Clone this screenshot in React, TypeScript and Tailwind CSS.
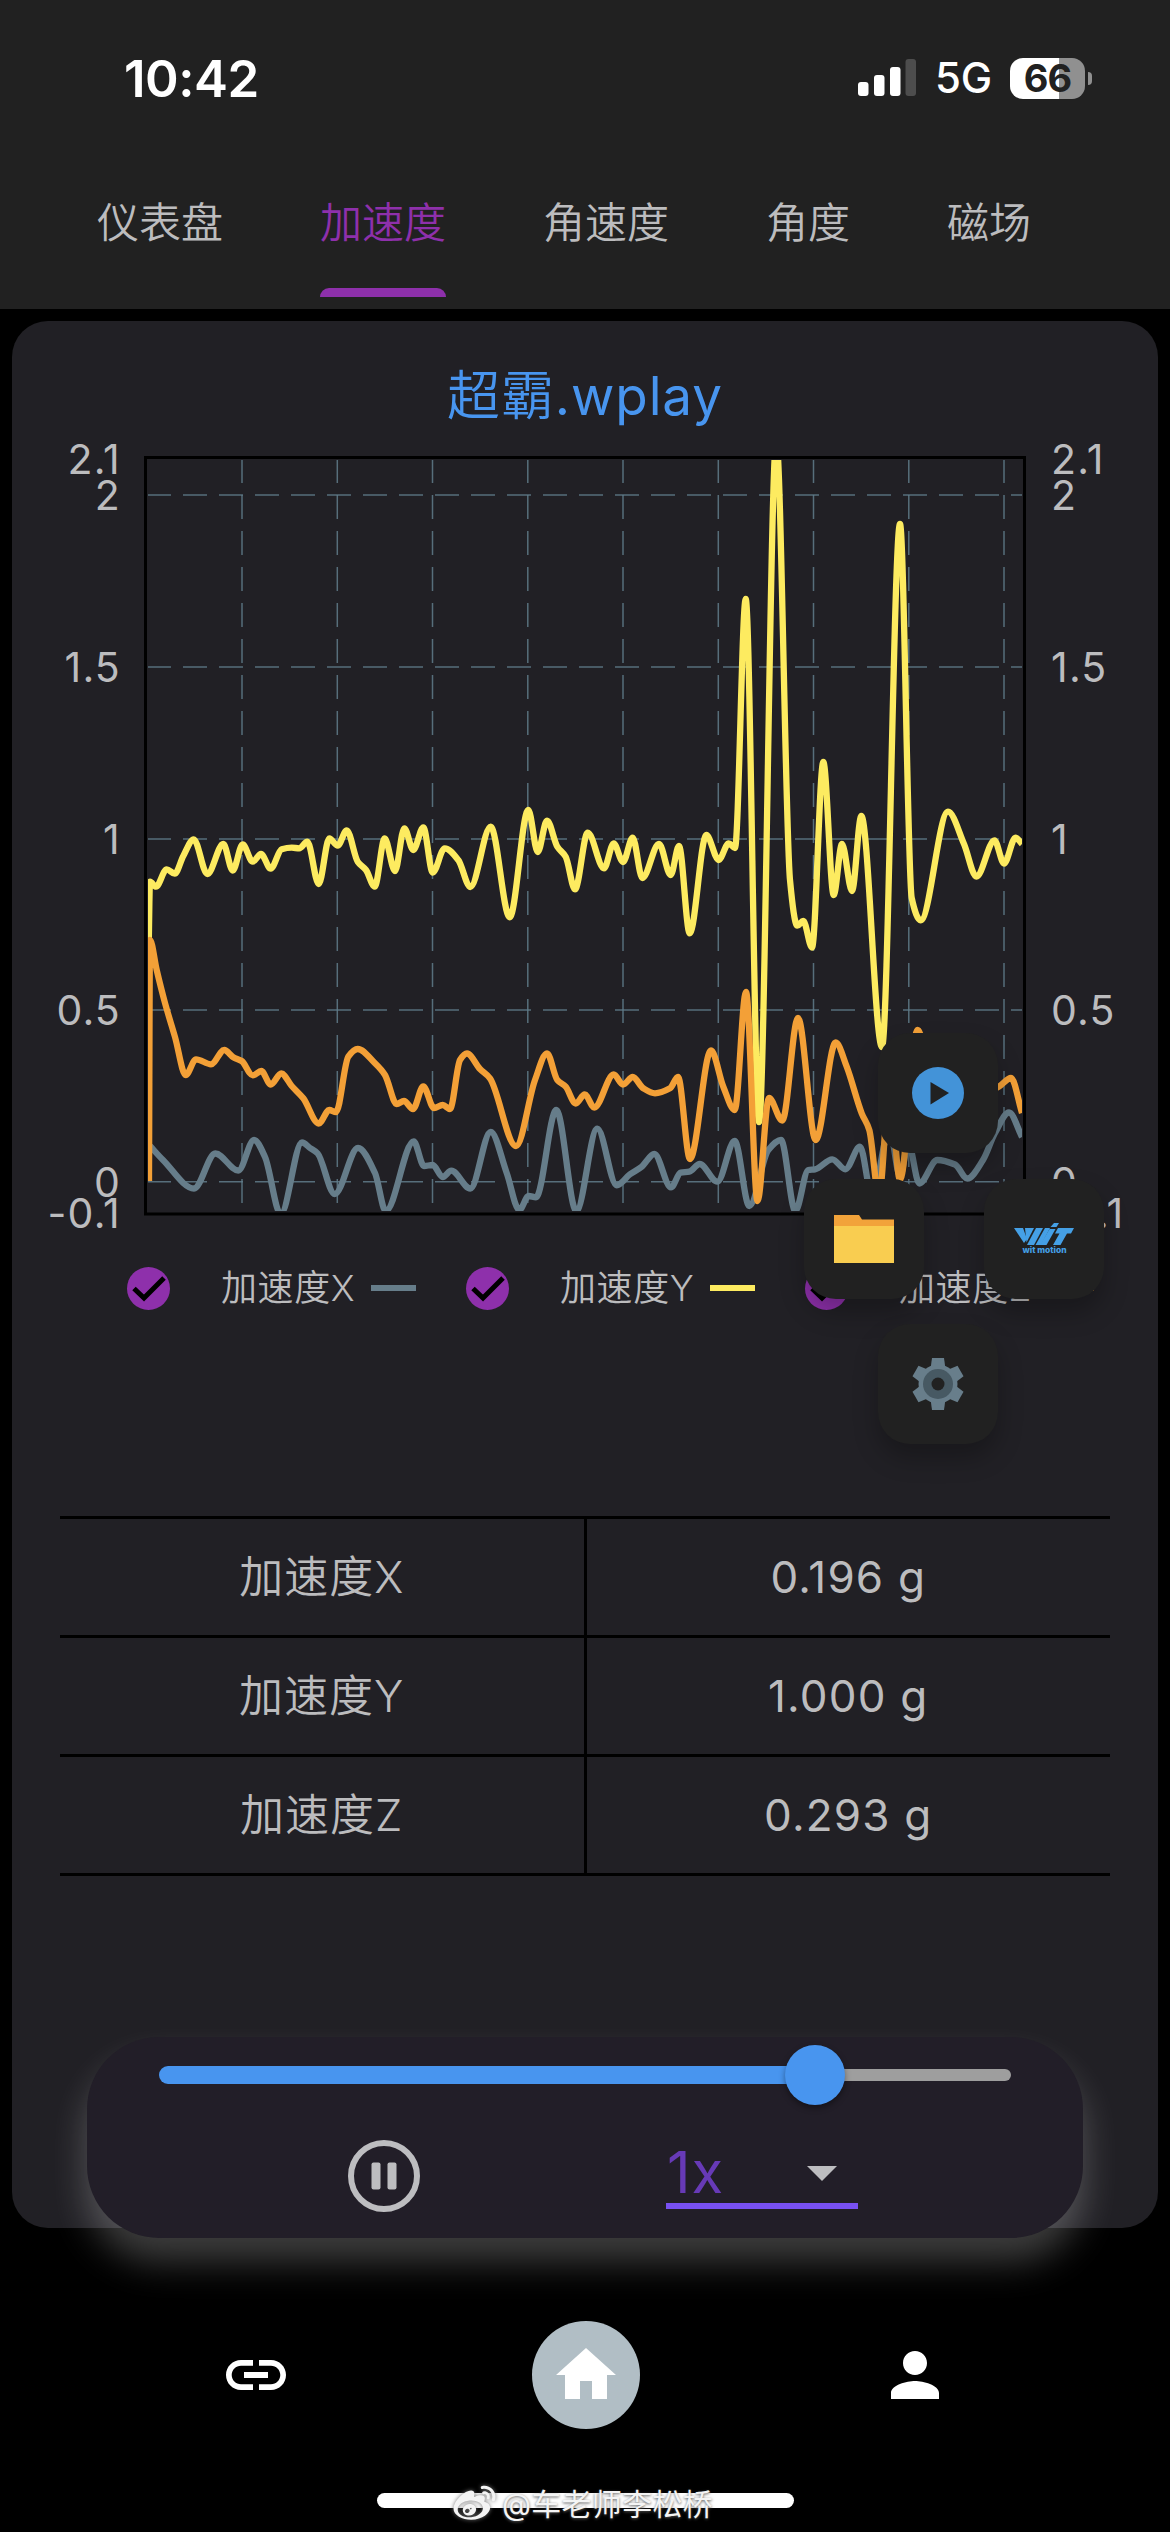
import type { ReactNode } from "react";
import { MdArrowDropDown, MdHome, MdLink, MdPerson } from "react-icons/md";
import { FaWeibo } from "react-icons/fa";

type Point = [number, number];

const tabs = ["仪表盘", "加速度", "角速度", "角度", "磁场"];

const rows = [
  { label: "加速度X", value: "0.196 g" },
  { label: "加速度Y", value: "1.000 g" },
  { label: "加速度Z", value: "0.293 g" },
];

const gridX = [242, 337.3, 432.5, 527.8, 623, 718.3, 813.5, 908.8, 1004];
const gridY = [495, 667, 839, 1010, 1181.7];

const yLabels = [
  { text: "2.1", y: 459 },
  { text: "2", y: 495.5 },
  { text: "1.5", y: 667.5 },
  { text: "1", y: 839 },
  { text: "0.5", y: 1010 },
  { text: "0", y: 1182 },
  { text: "-0.1", y: 1213.5 },
];

const accX: Point[] = [
  [150, 1146], [163, 1160], [194, 1188.5], [215.3, 1153.5], [238.3, 1170.5], [254, 1140], [265, 1157],
  [280.7, 1214], [302, 1142.5], [310, 1148], [317.7, 1153.5], [334.7, 1194], [358, 1148], [375, 1173],
  [385.7, 1211], [413.7, 1141.5], [424, 1166], [432.7, 1165], [442.7, 1177], [451.3, 1170.7],
  [470.3, 1188.5], [490.7, 1132], [506.7, 1173], [519.3, 1210], [528.7, 1196], [536, 1197.3],
  [556.3, 1110], [576.3, 1211], [597.3, 1128.7], [616.7, 1185.3], [630, 1174.3], [641.7, 1166.7],
  [654.3, 1154], [671, 1187.3], [680.7, 1172.7], [689.3, 1171.7], [699.7, 1164], [717.3, 1181.7],
  [734.7, 1141], [749.3, 1206], [768.3, 1150], [781, 1140], [795.3, 1211], [808.3, 1170],
  [815, 1169.3], [832.3, 1159.3], [845.3, 1169.3], [860, 1146.7], [872, 1196], [889.5, 1130],
  [900, 1176], [908.5, 1144], [919.3, 1183.5], [937.3, 1160], [955, 1164.5], [967.3, 1178.5],
  [983, 1160], [995, 1133], [1009, 1112.5], [1022, 1137],
];

const accY: Point[] = [
  [148.5, 960], [150, 881.7], [156, 886.7], [166.7, 869.3], [174.7, 873.7], [183.3, 856],
  [193.7, 839.3], [207.3, 874], [223.3, 844], [232.7, 870.5], [242.7, 844.5], [252.7, 861.7],
  [261, 854], [270.7, 868.7], [281.7, 849.3], [291.7, 847.7], [299.3, 848.3], [307.3, 841.7],
  [318.7, 884], [329.3, 838.5], [337.7, 845.7], [346.7, 830.3], [357.7, 861.7], [366, 870],
  [374.7, 886.7], [384.7, 838.5], [395, 871], [404.3, 828.3], [413.3, 850], [423.3, 827.3],
  [432.7, 872.5], [444.7, 848.3], [458.3, 860], [470.3, 887], [490.7, 826.7], [509.7, 917.3],
  [528.3, 810], [537.7, 852], [547, 820.7], [557.3, 846.7], [565.7, 856.7], [575, 889.3],
  [587.7, 832.7], [604, 868.3], [613.7, 843.3], [623, 862], [632.7, 837.7], [642.3, 878],
  [659, 844], [670.7, 875], [679, 846], [689.7, 933.3], [706.3, 835], [718.7, 860], [728.7, 843.3],
  [735, 848], [745.7, 599], [759, 1122], [776.3, 440], [790, 880], [797.3, 925.7], [803.3, 921],
  [812, 947.5], [823.3, 762], [833.7, 895], [842, 844], [852, 891], [861.3, 816], [882, 1047],
  [900, 524], [911.7, 898], [920.7, 920.3], [948, 811.7], [964, 844], [976.4, 876.5],
  [994.5, 840.5], [1004, 863.5], [1015.5, 837.7], [1022, 844],
];

const accZ: Point[] = [
  [149, 1181], [150, 940], [156.7, 970], [165, 1003], [175, 1037], [185.7, 1075], [196, 1059.3],
  [211, 1064.3], [224.3, 1050], [233.3, 1057.3], [241.7, 1061], [252.7, 1075.3], [261.3, 1071],
  [270.7, 1084.5], [281.3, 1073.5], [291.7, 1086], [303.3, 1098.3], [318.7, 1123.5], [329.3, 1110],
  [336, 1112], [348.3, 1056.7], [357.7, 1049], [375, 1063.3], [385, 1075], [396.7, 1104],
  [404, 1101], [413, 1109], [423.3, 1086.5], [434, 1108], [442.7, 1105], [450, 1109], [460, 1060],
  [467, 1053.5], [480, 1069], [490, 1078.3], [516, 1146], [535, 1080], [547, 1053.3],
  [557.3, 1080], [565.7, 1086.7], [575.7, 1103.5], [584.7, 1094.5], [594.3, 1107.5],
  [613.7, 1074.5], [623, 1084.5], [632.7, 1077], [643.3, 1088.3], [655, 1093.3], [670, 1088.3],
  [678, 1077], [690, 1159], [711, 1050.5], [723.3, 1086.7], [734.7, 1110], [746, 992],
  [757.5, 1201], [769, 1098], [782.3, 1120.5], [798, 1018], [815.7, 1140], [835.7, 1042.5],
  [846.7, 1066.7], [861.7, 1113.3], [869.3, 1130], [879, 1196], [889.5, 1090], [900, 1180],
  [917.5, 1030], [940, 1130], [970, 1100], [990, 1091], [999, 1086.5], [1011, 1078], [1022, 1113],
];

// monotone cubic interpolation, keeps the peaks where the samples are
function curve(pts: Point[]) {
  const n = pts.length;
  const slope: number[] = [];
  for (let i = 0; i < n - 1; i++) {
    slope.push((pts[i + 1][1] - pts[i][1]) / (pts[i + 1][0] - pts[i][0]));
  }
  const m = pts.map((_, i) => {
    if (i === 0) return slope[0];
    if (i === n - 1) return slope[n - 2];
    const a = slope[i - 1];
    const b = slope[i];
    return a * b <= 0 ? 0 : (2 * a * b) / (a + b);
  });
  let d = `M${pts[0][0]} ${pts[0][1]}`;
  for (let i = 0; i < n - 1; i++) {
    const [x0, y0] = pts[i];
    const [x1, y1] = pts[i + 1];
    const h = (x1 - x0) / 3;
    d += `C${x0 + h} ${y0 + m[i] * h} ${x1 - h} ${y1 - m[i + 1] * h} ${x1} ${y1}`;
  }
  return d;
}

function StatusBar() {
  return (
    <div className="flex h-[156px] items-center justify-between pl-[124px] pr-[78px]">
      <span className="text-[51px] font-semibold leading-none tracking-[-0.5px] text-white">10:42</span>
      <div className="flex items-center">
        <svg width="58" height="38" viewBox="0 0 58 38" fill="#fff">
          <rect x="0" y="23" width="10.5" height="14" rx="3" />
          <rect x="16" y="16" width="10.5" height="21" rx="3" />
          <rect x="32" y="8" width="10.5" height="29" rx="3" />
          <rect x="47.5" y="0" width="10.5" height="37" rx="3" fill="#4d4d4d" />
        </svg>
        <span className="ml-[19px] w-[58px] text-[42px] font-[450] leading-none tracking-[-0.3px] text-white">5G</span>
        <div className="ml-[17px] flex h-[41px] w-[75px] items-center justify-center rounded-[13px] bg-[linear-gradient(90deg,#fff_66%,#909090_66%)]">
          <span className="text-[38px] font-bold leading-none tracking-[-1px] text-[#212121]">66</span>
        </div>
        <div className="ml-[3px] h-[13px] w-[4px] rounded-r-full bg-[#909090]" />
      </div>
    </div>
  );
}

function Chart() {
  return (
    <svg className="block" width="1146" height="810" viewBox="12 430 1146 810">
      <clipPath id="plot">
        <rect x="148" y="460" width="874" height="751" />
      </clipPath>
      <g stroke="#607d8b" strokeOpacity="0.85" strokeWidth="1.5" strokeDasharray="24 12" clipPath="url(#plot)">
        {gridX.map((x) => <path key={x} d={`M${x} 459V1203`} />)}
        {gridY.map((y) => <path key={y} d={`M147 ${y}H1022`} />)}
      </g>
      <rect x="145.5" y="457.5" width="879" height="756.5" fill="none" stroke="#000" strokeWidth="3" />
      <g fill="none" strokeWidth="6.3" strokeLinejoin="round" clipPath="url(#plot)">
        <path d={curve(accX)} stroke="#667d8a" />
        <path d={curve(accY)} stroke="#fdeb60" />
        <path d={curve(accZ)} stroke="#f3a037" />
      </g>
      <g fill="#bcbcbe" fontSize="41" className="font-normal tracking-[1.2px]">
        {yLabels.map((l) => (
          <g key={l.text}>
            <text x="121" y={l.y + 14.5} textAnchor="end">{l.text}</text>
            <text x="1051" y={l.y + 14.5}>{l.text}</text>
          </g>
        ))}
      </g>
    </svg>
  );
}

function LegendItem({ name, line }: { name: string; line: string }) {
  return (
    <div className="flex w-[339px] shrink-0 items-center">
      <svg width="43" height="43" viewBox="0 0 43 43">
        <circle cx="21.5" cy="21.5" r="21.5" fill="#8e30ab" />
        <path d="M7 21.5L17 31L37 11" fill="none" stroke="#000" strokeWidth="5" />
      </svg>
      <span className="ml-[51px] w-[133px] whitespace-nowrap text-[36px] font-[350] leading-none tracking-[0.6px]">{name}</span>
      <span className={`ml-[17px] h-[6px] w-[45px] ${line}`} />
    </div>
  );
}

function MenuButton({ place, children }: { place: string; children: ReactNode }) {
  return (
    <button className={`absolute flex h-[120px] w-[120px] items-center justify-center rounded-[32px] bg-[#212121] shadow-[0_14px_24px_rgba(0,0,0,0.25)] ${place}`}>
      {children}
    </button>
  );
}

function FloatingMenu() {
  return (
    <div className="absolute left-[792px] top-[712px] h-[412px] w-[300px]">
      <MenuButton place="left-[74px] top-0">
        <svg width="52" height="52" viewBox="0 0 52 52">
          <circle cx="26" cy="26" r="26" fill="#4393d8" />
          <path d="M18.500 15L37 26L18.500 37.500Z" fill="#212121" />
        </svg>
      </MenuButton>
      <MenuButton place="left-0 top-[146px]">
        <svg width="60" height="48" viewBox="0 0 60 48">
          <path d="M0 0H25L28 4.500H60V20H0Z" fill="#f2a33a" />
          <path d="M0 11H60V48H0Z" fill="#f9cd50" />
        </svg>
      </MenuButton>
      <MenuButton place="left-[180px] top-[146px]">
        <svg width="60" height="32" viewBox="0 0 60 32" fill="#45a0e6">
          <path d="M0 5H9L13 16L10 20Z" />
          <path d="M11 5H20L12.500 19.500Z" />
          <path d="M22 5H29L20 22H13Z" />
          <path d="M31 5H36L27 22H21.500Z" />
          <path d="M40 0H45L42.500 4H36.500Z" />
          <path d="M35.500 6H41.500L32.500 22H26Z" />
          <path d="M44 5H60L57 10.500H53L46.500 22H39L45.500 10.500H41Z" />
          <text x="8.500" y="29.500" fontSize="8" fontWeight="800" textLength="44" lengthAdjust="spacingAndGlyphs">wit motion</text>
        </svg>
      </MenuButton>
      <MenuButton place="left-[74px] top-[291px]">
        <svg width="52" height="52" viewBox="-26 -26 52 52">
          <g fill="#687e8b">
            <circle r="19.500" />
            {[0, 60, 120, 180, 240, 300].map((a) => (
              <path key={a} d="M-6 -26H6L7.500 -15H-7.500Z" transform={`rotate(${a})`} />
            ))}
          </g>
          <circle r="15" fill="#475963" />
          <circle r="6.500" fill="#212121" />
        </svg>
      </MenuButton>
    </div>
  );
}

function Player() {
  return (
    <div className="absolute left-[75px] top-[1716px] h-[201px] w-[996px] rounded-[72px] bg-[#221e28] px-[72px] shadow-[0_24px_36px_rgba(255,255,255,0.24)]">
      <div className="relative flex h-[75px] items-center">
        <div className="h-[18px] w-[655px] rounded-l-full bg-[#4895ef]" />
        <div className="h-[12px] w-[197px] rounded-r-full bg-[#9e9e9e]" />
        <div className="absolute left-[626px] h-[60px] w-[60px] rounded-full bg-[#4895ef] shadow-[0_3px_6px_rgba(0,0,0,0.4)]" />
      </div>
      <div className="flex items-start">
        <svg className="ml-[189px] mt-[28px]" width="72" height="72" viewBox="0 0 72 72">
          <circle cx="36" cy="36" r="33" fill="none" stroke="#bdbdc0" strokeWidth="6" />
          <rect x="23.500" y="22.500" width="9" height="27" rx="2" fill="#bdbdc0" />
          <rect x="39.500" y="22.500" width="9" height="27" rx="2" fill="#bdbdc0" />
        </svg>
        <div className="ml-[246px] mt-[24px] flex h-[73px] w-[192px] items-center justify-between border-b-[6px] border-[#7850f2]">
          <span className="pl-[1px] pt-[4px] text-[58px] font-normal leading-none tracking-[1px] text-[#673ab7]">1x</span>
          <MdArrowDropDown className="mt-[4px] h-[72px] w-[72px] text-[#bdbdc0]" />
        </div>
      </div>
    </div>
  );
}

export default function App() {
  return (
    <div className="relative flex h-[2532px] w-[1170px] flex-col overflow-hidden bg-black text-[#bcbcbe] [font-family:Inter,'Noto_Sans_CJK_SC',sans-serif]">
      <header className="h-[309px] bg-[#212121]">
        <StatusBar />
        <nav className="flex h-[141px] gap-[97px] pl-[97px]">
          {tabs.map((t, i) => (
            <div key={t} className={`flex flex-col justify-between text-[42px] font-[350] ${i === 1 ? "text-[#8e30ab]" : ""}`}>
              <span className="mt-[46px] leading-[42px]">{t}</span>
              {i === 1 && <span className="h-[9px] rounded-t-[9px] bg-[#8e30ab]" />}
            </div>
          ))}
        </nav>
      </header>

      <main className="relative mx-[12px] mt-[12px] h-[1907px] rounded-[36px] bg-[#212025]">
        <h1 className="h-[109px] pt-[48px] text-center text-[53px] font-[350] leading-[54px] tracking-[0.9px] text-[#4895ef]">
          超霸<span className="font-normal">.wplay</span>
        </h1>
        <Chart />
        <div className="flex h-[96px] items-center overflow-hidden pl-[115px]">
          <LegendItem name="加速度X" line="bg-[#667d8a]" />
          <LegendItem name="加速度Y" line="bg-[#fdeb60]" />
          <LegendItem name="加速度Z" line="bg-[#f3a037]" />
        </div>
        <div className="mx-[48px] mt-[180px] border-t-[3px] border-black">
          {rows.map((r) => (
            <div key={r.label} className="flex h-[119px] border-b-[3px] border-black text-center text-[44px] leading-[117px]">
              <span className="flex-1 border-r-[3px] border-black font-[350] tracking-[1px]">{r.label}</span>
              <span className="flex-1 font-normal tracking-[1.2px]">{r.value}</span>
            </div>
          ))}
        </div>
        <FloatingMenu />
        <Player />
      </main>

      <footer className="flex h-[293px] items-center justify-between pl-[220px] pr-[219px] text-white">
        <MdLink className="h-[72px] w-[72px]" />
        <div className="flex h-[108px] w-[108px] items-center justify-center rounded-full bg-[#b1bec5]">
          <MdHome className="h-[72px] w-[72px]" />
        </div>
        <MdPerson className="h-[72px] w-[72px]" />
      </footer>

      <div className="absolute bottom-[24px] left-[377px] h-[15px] w-[417px] rounded-full bg-white" />
      <div className="absolute bottom-[7px] left-[453px] flex items-center gap-[6px] text-[#f4f4f4] [text-shadow:0_1px_3px_#555]">
        <FaWeibo className="h-[42px] w-[43px] drop-shadow-[0_0_2px_#777]" />
        <span className="text-[30px] leading-[42px] tracking-[0.3px]">@车老师李松桥</span>
      </div>
    </div>
  );
}
